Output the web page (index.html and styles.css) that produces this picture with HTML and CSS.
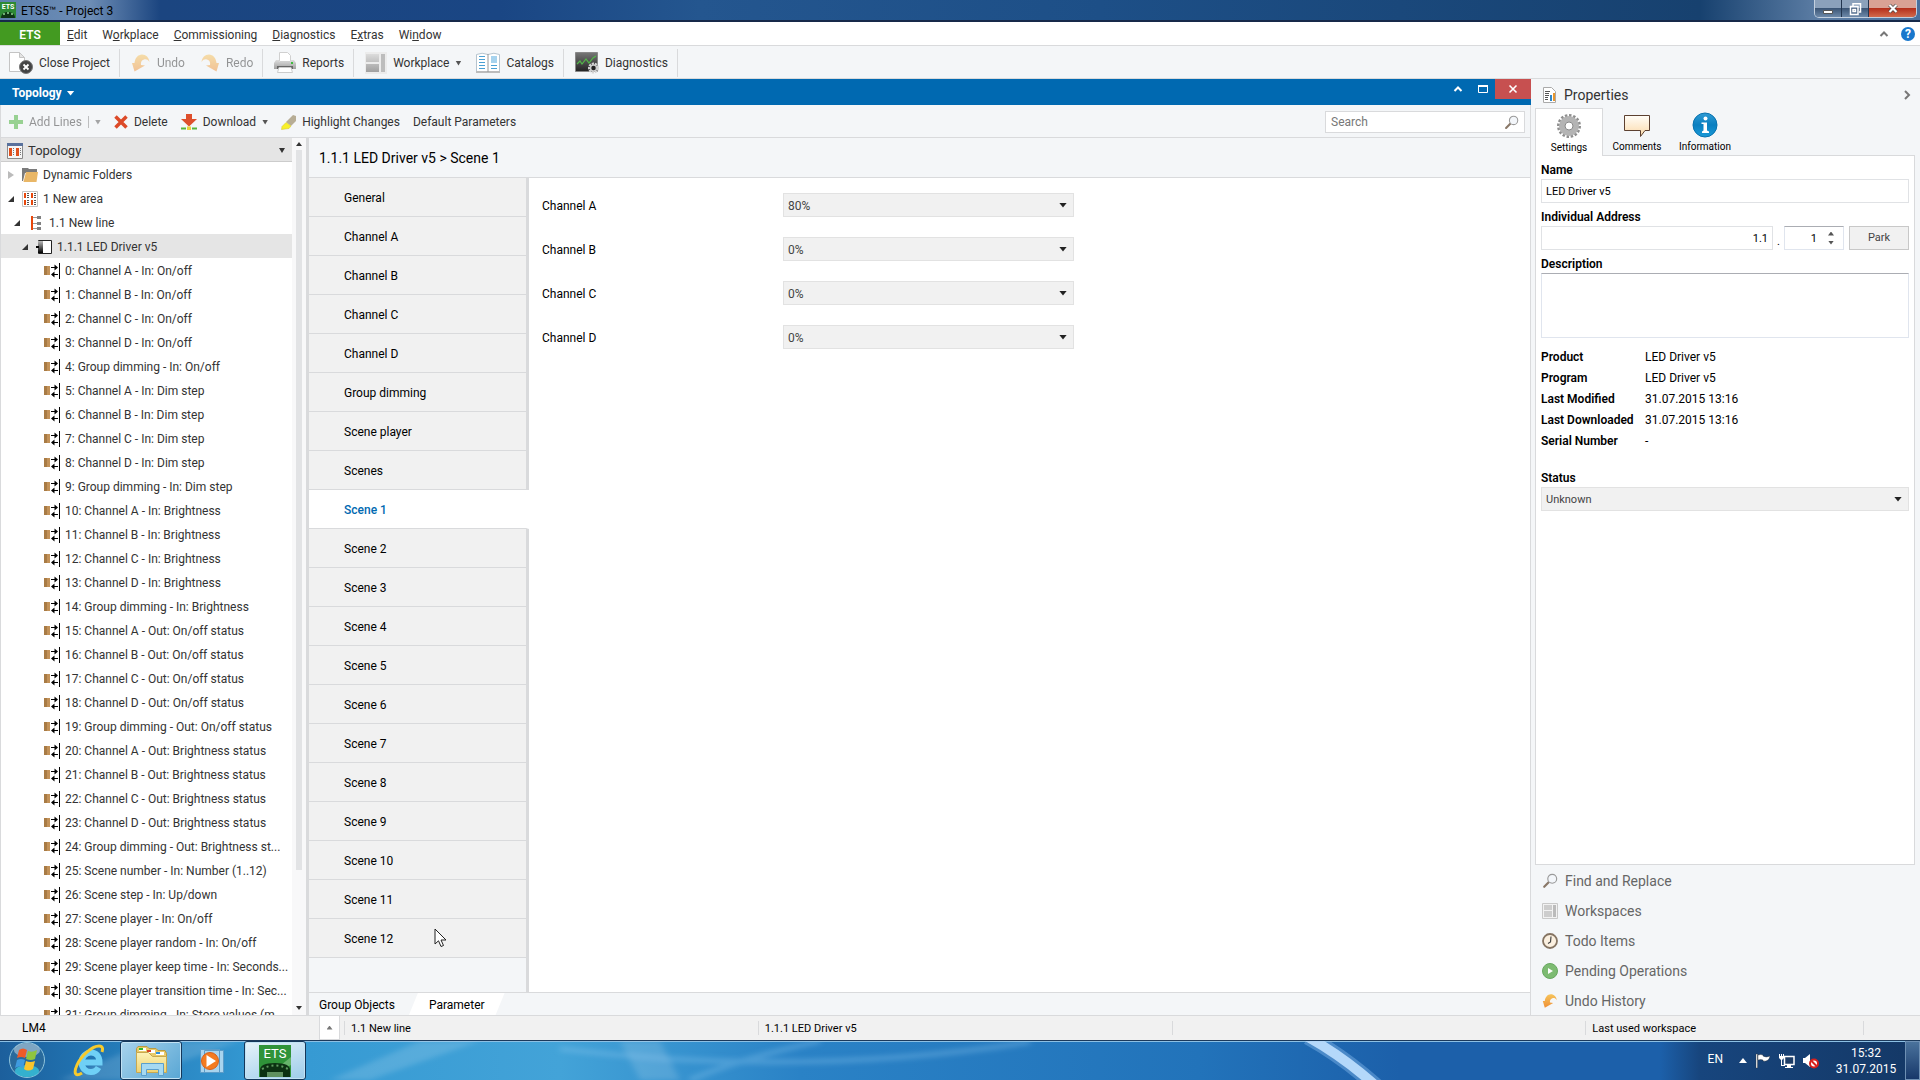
FILE: index.html
```
<!DOCTYPE html>
<html lang="en">
<head>
    <meta charset="UTF-8">
    <meta name="viewport" content="width=device-width, initial-scale=1.0">
    <title>ETS5™ - Project 3</title>
    <link rel="stylesheet" href="styles.css">
</head>
<body>
    <!-- shared icons -->
    <svg class="defs" width="0" height="0">
        <defs>
            <linearGradient id="gFolder" x1="0" y1="0" x2="0" y2="1"><stop offset="0" stop-color="#fdf3b8"/><stop offset="1" stop-color="#efd272"/></linearGradient>
            <linearGradient id="gGrey" x1="0" y1="0" x2="0" y2="1"><stop offset="0" stop-color="#dcdcdc"/><stop offset="1" stop-color="#a0a0a0"/></linearGradient>
            <linearGradient id="gDark" x1="0" y1="0" x2="0" y2="1"><stop offset="0" stop-color="#777"/><stop offset="1" stop-color="#222"/></linearGradient>
            <linearGradient id="gInfo" x1="0" y1="0" x2="0" y2="1"><stop offset="0" stop-color="#2f9bd4"/><stop offset="0.5" stop-color="#0a7fc0"/><stop offset="1" stop-color="#1a9ad8"/></linearGradient>
            <linearGradient id="gNote" x1="0" y1="0" x2="0" y2="1"><stop offset="0" stop-color="#fffdf8"/><stop offset="1" stop-color="#fbd9a8"/></linearGradient>
            <linearGradient id="gDim" x1="0" y1="1" x2="0" y2="0"><stop offset="0" stop-color="#000"/><stop offset="1" stop-color="#bbb"/></linearGradient>
            <linearGradient id="gUndo" x1="0" y1="0" x2="0" y2="1"><stop offset="0" stop-color="#f6c45c"/><stop offset="1" stop-color="#ef8f35"/></linearGradient>
        </defs>
        <symbol id="obj" viewBox="0 0 16 16">
            <path fill="#a87b45" d="M0 3h3v9H0z"/><path fill="#c39259" d="M3 3h3v9H3z"/>
            <path stroke="#000" fill="none" stroke-width="1.2" d="M7 4.5h5M8 11.500h6"/>
            <path d="M10.500 1.500 14 4.500l-3.500 3zM10.500 8.500 7 11.500l3.500 3z"/>
            <path d="M15 0h1v16h-1z"/>
        </symbol>
        <symbol id="undo" viewBox="0 0 20 20">
            <path fill="url(#gUndo)" d="M1 10 3.500 10C4 5 7 1.500 11 1.500c4 0 7 3 7.500 7.500C17 6.500 15 6 13 6.500c-2.500.7-3.500 3-3 5.500l4 .5L3.500 18.500z"/>
        </symbol>
        <symbol id="close" viewBox="0 0 16 16"><path d="m4 4 8 8m0-8-8 8"/></symbol>
        <symbol id="lens" viewBox="0 0 18 18">
            <path stroke="#8a7868" stroke-width="2.500" stroke-linecap="round" d="m2.500 15.500 5-5"/>
            <circle cx="11.500" cy="6.500" r="5" fill="#f3f6fa" stroke="#9a9a9a" stroke-width="1.300"/>
        </symbol>
    </svg>

    <header class="titlebar">
        <svg class="app-icon" viewBox="0 0 16 16"><path fill="#2d8a34" d="M0 0h16v16H0z"/><path fill="#0e3314" d="M1 16c0-4 3-6 7-6s7 2 7 6z"/><path fill="#6fae72" d="M3 11h2v2H3zm4-1h2v2H7zm4 1h2v2h-2z"/><text x="8" y="7" font-size="7" font-weight="bold" fill="#fff" text-anchor="middle">ETS</text></svg>
        <span class="title">ETS5™ - Project 3</span>
        <div class="win-buttons">
            <button aria-label="Minimize"><svg viewBox="0 0 16 14"><path fill="#fff" stroke="#555" d="M3.500 8.500h9v3h-9z"/></svg></button>
            <button aria-label="Restore"><svg viewBox="0 0 16 14"><path fill="none" stroke="#fff" stroke-width="1.500" d="M6 4V1.700h7.500V10H12M3.500 4.500h7.500v8H3.500zM6 7.500h2.500v2H6z"/></svg></button>
            <button class="win-close" aria-label="Close"><svg viewBox="0 0 16 16"><path stroke="#444" stroke-width="4" d="m4 3.500 8 8m0-8-8 8"/><path stroke="#fff" stroke-width="2.500" d="m4 3.500 8 8m0-8-8 8"/></svg></button>
        </div>
    </header>

    <nav class="menubar">
        <button class="ets">ETS</button>
        <button><u>E</u>dit</button>
        <button>W<u>o</u>rkplace</button>
        <button><u>C</u>ommissioning</button>
        <button><u>D</u>iagnostics</button>
        <button>E<u>x</u>tras</button>
        <button>Wi<u>n</u>dow</button>
        <div class="menu-right">
            <svg width="10" height="8" viewBox="0 0 10 8"><path fill="none" stroke="#777" stroke-width="2" d="m1.500 6 3.500-3.500L8.500 6"/></svg>
            <button class="help" aria-label="Help">?</button>
        </div>
    </nav>

    <div class="toolbar main-toolbar">
        <button class="group first"><svg width="24" height="24" viewBox="0 0 24 24"><path fill="#fff" stroke="#c4c4c4" d="M.5 1.500h10l5 5v14H.5z"/><path fill="#e4e4e4" stroke="#c4c4c4" d="M10.500 1.500v5h5z"/><circle cx="17" cy="16" r="6.500" fill="#444" stroke="#777"/><path stroke="#fff" stroke-width="1.800" d="m14.500 13.500 5 5m0-5-5 5"/></svg>Close Project</button>
        <div class="group">
            <button class="off"><svg width="20" height="20"><use href="#undo"/></svg>Undo</button>
            <button class="off redo"><svg class="flip" width="20" height="20"><use href="#undo"/></svg>Redo</button>
        </div>
        <button class="group"><svg width="22" height="22" viewBox="0 0 22 22"><path fill="#fff" stroke="#d0d0d0" d="M5.500.5h8l3 3v6h-11z"/><path fill="url(#gGrey)" d="M2 8h3v2h12V8h3l2 3v6H0v-6z"/><path fill="#666" d="M3 14h16v3H3z"/><path fill="#fff" stroke="#ccc" d="M5 15.500h12l1.500 5h-15z"/><path fill="#3dbb3d" d="M17 10h2v2h-2z"/></svg>Reports</button>
        <div class="group">
            <button><svg width="22" height="22" viewBox="0 0 22 22"><path fill="#ececec" d="M0 0h22v22H0z"/><path fill="url(#gGrey)" d="M1 2h13v8H1zM1 12h13v8H1z"/><path fill="#bdbdbd" d="M16 2h4v18h-4z"/></svg>Workplace<i class="arrow"></i></button>
            <button><svg width="24" height="22" viewBox="0 0 24 22"><path fill="#fff" stroke="#b5c4cf" d="M.5 2.500Q6 0 12 2.500 18 0 23.500 2.500v18H.5z"/><path fill="#bcbcbc" d="M0 19h24v2H0z"/><path stroke="#999" d="M12 2v18"/><path stroke="#4aa0d4" d="M3 4.500h6M3 7.500h6M3 10.500h6M3 13.500h6M3 16.500h6M15 13.500h6M15 16.500h6"/><path fill="#a7d3ee" d="M15 4h6v7h-6z"/></svg>Catalogs</button>
        </div>
        <button class="group"><svg width="24" height="22" viewBox="0 0 24 22"><path fill="url(#gDark)" stroke="#888" d="M.5.5h22v19H.5z"/><path fill="none" stroke="#52b848" stroke-width="1.200" d="m2 12 3-3 2 3 4-5 3 4 4-5 3-2"/><circle cx="18.500" cy="16" r="4" fill="none" stroke="#d4d4d4" stroke-width="3" stroke-dasharray="2 .8"/><circle cx="18.500" cy="16" r="3" fill="#222" stroke="#ccc" stroke-width="1.500"/></svg>Diagnostics</button>
    </div>

    <main class="workspace">
        <section class="window">
            <div class="window-title">
                <h1>Topology <i class="arrow"></i></h1>
                <div class="window-buttons">
                    <button aria-label="Collapse"><svg width="10" height="10" viewBox="0 0 10 10"><path fill="none" stroke="#fff" stroke-width="2" d="m1.500 7 3.500-3.500L8.500 7"/></svg></button>
                    <button aria-label="Maximize"><svg width="10" height="10" viewBox="0 0 10 10"><path fill="none" stroke="#fff" d="M.5 1.500h9v7h-9z"/><path fill="#fff" d="M0 1h10v2H0z"/></svg></button>
                    <button class="red" aria-label="Close"><svg width="14" height="14" stroke="#fff" stroke-width="1.800"><use href="#close"/></svg></button>
                </div>
            </div>

            <div class="toolbar edit-toolbar">
                <button class="off"><svg width="14" height="14" viewBox="0 0 14 14"><path fill="#3fae2f" d="M5 0h4v5h5v4H9v5H5V9H0V5h5z"/></svg>Add Lines<span class="split"></span><i class="arrow"></i></button>
                <button><svg width="14" height="14" viewBox="0 0 14 14"><path stroke="#dc4a28" stroke-width="3.500" d="m1.500 1.500 11 11m0-11-11 11"/></svg>Delete</button>
                <button><svg width="16" height="16" viewBox="0 0 16 16"><path fill="#de4f2c" d="M5 0h6v5h5l-8 7.500L0 5h5z"/><path fill="#57b43c" d="M0 13.500h5v2H0zM11 13.500h5v2h-5z"/><path fill="#e8d23c" d="M6 12.500h4V16H6z"/></svg>Download<i class="arrow"></i></button>
                <button><svg width="15" height="15" viewBox="0 0 15 15"><path fill="#b7ad95" d="m5 7 7-7 3 1v5L10 11z"/><path fill="#f8f028" stroke="#cfc12f" stroke-width=".5" d="M5 7.500 10 11l-2 2.500-7.500 1 .5-3z"/></svg>Highlight Changes</button>
                <button>Default Parameters</button>
                <label class="search"><input type="text" placeholder="Search" aria-label="Search"><svg width="15" height="15"><use href="#lens"/></svg></label>
            </div>

            <div class="content">
                <div class="tree-pane">
                    <div class="tree-head"><svg width="16" height="16" viewBox="0 0 16 16"><path fill="#f6f6f6" stroke="#8a8a8a" d="M.5.5h15v15H.5z"/><path fill="#59719c" d="M0 0h16v3H0z"/><path fill="#e04f1c" d="M2 5h3v8H2zM9 5h3v8H9z"/><path stroke="#777" stroke-dasharray="1 1" d="M6.500 5v8M13.500 5v8"/></svg>Topology<i class="arrow"></i></div>
                    <ul class="tree">
                        <li class="lv0"><i class="shut"></i><svg viewBox="0 0 16 16"><path fill="#7b7b7b" d="M0 1h6l1 1h8v4H3L1 14H0z"/><path fill="#e9b767" d="M4 5h12l-1.500 10H1.500z"/></svg>Dynamic Folders</li>
                        <li class="lv0"><i class="open"></i><svg viewBox="0 0 16 16"><path fill="#fff" stroke="#c4c4c4" d="M.5.5h15v15H.5z"/><path fill="#e8470c" d="M2 2h2v5H2zM9 2h2v5H9zM2 9h2v5H2zM9 9h2v5H9z"/><path stroke="#555" stroke-dasharray="1 1" stroke-width="2" d="M6 2v5M6 9v5M13 2v5M13 9v5"/></svg>1 New area</li>
                        <li class="lv1"><i class="open"></i><svg viewBox="0 0 16 16"><path fill="#e8470c" d="M3 1h2v14H3z"/><path stroke="#999" d="M5 2.500h5M5 8.500h5M5 13.500h5"/><path fill="#808080" d="M9 1h4v3H9zM9 7h4v3H9zM9 12h4v3H9z"/></svg>1.1 New line</li>
                        <li class="lv2 selected"><i class="open"></i><svg viewBox="0 0 16 16"><path fill="#fff" stroke="#222" d="M2.500 1.500h13v13h-13z"/><path fill="url(#gDim)" d="M2 2h5v12H2z"/><path d="M0 7h3v2H0z"/></svg>1.1.1 LED Driver v5</li>
                        <li><svg><use href="#obj"/></svg>0: Channel A - In: On/off</li>
                        <li><svg><use href="#obj"/></svg>1: Channel B - In: On/off</li>
                        <li><svg><use href="#obj"/></svg>2: Channel C - In: On/off</li>
                        <li><svg><use href="#obj"/></svg>3: Channel D - In: On/off</li>
                        <li><svg><use href="#obj"/></svg>4: Group dimming - In: On/off</li>
                        <li><svg><use href="#obj"/></svg>5: Channel A - In: Dim step</li>
                        <li><svg><use href="#obj"/></svg>6: Channel B - In: Dim step</li>
                        <li><svg><use href="#obj"/></svg>7: Channel C - In: Dim step</li>
                        <li><svg><use href="#obj"/></svg>8: Channel D - In: Dim step</li>
                        <li><svg><use href="#obj"/></svg>9: Group dimming - In: Dim step</li>
                        <li><svg><use href="#obj"/></svg>10: Channel A - In: Brightness</li>
                        <li><svg><use href="#obj"/></svg>11: Channel B - In: Brightness</li>
                        <li><svg><use href="#obj"/></svg>12: Channel C - In: Brightness</li>
                        <li><svg><use href="#obj"/></svg>13: Channel D - In: Brightness</li>
                        <li><svg><use href="#obj"/></svg>14: Group dimming - In: Brightness</li>
                        <li><svg><use href="#obj"/></svg>15: Channel A - Out: On/off status</li>
                        <li><svg><use href="#obj"/></svg>16: Channel B - Out: On/off status</li>
                        <li><svg><use href="#obj"/></svg>17: Channel C - Out: On/off status</li>
                        <li><svg><use href="#obj"/></svg>18: Channel D - Out: On/off status</li>
                        <li><svg><use href="#obj"/></svg>19: Group dimming - Out: On/off status</li>
                        <li><svg><use href="#obj"/></svg>20: Channel A - Out: Brightness status</li>
                        <li><svg><use href="#obj"/></svg>21: Channel B - Out: Brightness status</li>
                        <li><svg><use href="#obj"/></svg>22: Channel C - Out: Brightness status</li>
                        <li><svg><use href="#obj"/></svg>23: Channel D - Out: Brightness status</li>
                        <li><svg><use href="#obj"/></svg>24: Group dimming - Out: Brightness st...</li>
                        <li><svg><use href="#obj"/></svg>25: Scene number - In: Number (1..12)</li>
                        <li><svg><use href="#obj"/></svg>26: Scene step - In: Up/down</li>
                        <li><svg><use href="#obj"/></svg>27: Scene player - In: On/off</li>
                        <li><svg><use href="#obj"/></svg>28: Scene player random - In: On/off</li>
                        <li><svg><use href="#obj"/></svg>29: Scene player keep time - In: Seconds...</li>
                        <li><svg><use href="#obj"/></svg>30: Scene player transition time - In: Sec...</li>
                        <li><svg><use href="#obj"/></svg>31: Group dimming - In: Store values (m...</li>
                    </ul>
                </div>
                <div class="scroll"><i class="arrow up"></i><div class="thumb"></div><i class="arrow"></i></div>

                <div class="device">
                    <h2>1.1.1 LED Driver v5 &gt; Scene 1</h2>
                    <div class="params">
                        <nav class="pages">
                            <button>General</button>
                            <button>Channel A</button>
                            <button>Channel B</button>
                            <button>Channel C</button>
                            <button>Channel D</button>
                            <button>Group dimming</button>
                            <button>Scene player</button>
                            <button>Scenes</button>
                            <button class="active">Scene 1</button>
                            <button>Scene 2</button>
                            <button>Scene 3</button>
                            <button>Scene 4</button>
                            <button>Scene 5</button>
                            <button>Scene 6</button>
                            <button>Scene 7</button>
                            <button>Scene 8</button>
                            <button>Scene 9</button>
                            <button>Scene 10</button>
                            <button>Scene 11</button>
                            <button>Scene 12</button>
                            <div class="rest"></div>
                        </nav>
                        <form class="channels">
                            <label for="chA">Channel A</label>
                            <div class="select"><select id="chA"><option>80%</option></select><i class="arrow"></i></div>
                            <label for="chB">Channel B</label>
                            <div class="select"><select id="chB"><option>0%</option></select><i class="arrow"></i></div>
                            <label for="chC">Channel C</label>
                            <div class="select"><select id="chC"><option>0%</option></select><i class="arrow"></i></div>
                            <label for="chD">Channel D</label>
                            <div class="select"><select id="chD"><option>0%</option></select><i class="arrow"></i></div>
                        </form>
                    </div>
                    <div class="bottom-tabs">
                        <button>Group Objects</button>
                        <button class="active">Parameter</button>
                    </div>
                </div>
            </div>
        </section>

        <aside class="side">
            <div class="side-head">
                <svg width="16" height="16" viewBox="0 0 16 16"><path fill="#fff" stroke="#aaa" d="M1.500.5h8l4 4v11h-12z"/><path stroke="#555" d="M3 4.500h5M3 6.500h4M3 8.500h4M3 10.500h3M3 12.500h3"/><path fill="#2e86c8" d="M8 8h2v6H8z"/><path fill="#e8962c" d="M11 6h2v8h-2z"/></svg>
                <span>Properties</span>
                <svg width="8" height="10" viewBox="0 0 8 10"><path fill="none" stroke="#777" stroke-width="2" d="m2 1 4 4-4 4"/></svg>
            </div>
            <div class="side-tabs">
                <button class="active"><svg width="26" height="26" viewBox="0 0 26 26"><circle cx="13" cy="13" r="10.500" fill="none" stroke="#8e8e8e" stroke-width="3" stroke-dasharray="2.400 1.700"/><circle cx="13" cy="13" r="7" fill="none" stroke="#b4b4b4" stroke-width="6"/><circle cx="13" cy="13" r="4" fill="#fff" stroke="#888"/></svg>Settings</button>
                <button><svg width="26" height="26" viewBox="0 0 26 26"><path fill="url(#gNote)" stroke="#5c4030" d="M.5 3.500h25v15h-4.500l-4.500 6v-6H.5z"/></svg>Comments</button>
                <button><svg width="26" height="26" viewBox="0 0 26 26"><circle cx="13" cy="13" r="12" fill="url(#gInfo)" stroke="#0872ae"/><circle cx="13.500" cy="6.500" r="2" fill="#fff"/><path fill="#fff" d="M9.500 10.500h5.500v8l2 1v1.500h-7v-1.500l1.500-1V12h-2z"/></svg>Information</button>
            </div>
            <form class="properties">
                <label for="name">Name</label>
                <input id="name" type="text" value="LED Driver v5">
                <label for="line">Individual Address</label>
                <div class="address">
                    <input id="line" class="line" type="text" value="1.1">
                    <span>.</span>
                    <div class="spinner"><input type="text" value="1" aria-label="Device address"><div><i class="arrow up"></i><i class="arrow"></i></div></div>
                    <button type="button">Park</button>
                </div>
                <label for="description">Description</label>
                <textarea id="description"></textarea>
                <dl>
                    <dt>Product</dt><dd>LED Driver v5</dd>
                    <dt>Program</dt><dd>LED Driver v5</dd>
                    <dt>Last Modified</dt><dd>31.07.2015 13:16</dd>
                    <dt>Last Downloaded</dt><dd>31.07.2015 13:16</dd>
                    <dt>Serial Number</dt><dd>-</dd>
                </dl>
                <label for="status">Status</label>
                <div class="select"><select id="status"><option>Unknown</option></select><i class="arrow"></i></div>
            </form>
            <nav class="side-links">
                <button><svg><use href="#lens"/></svg>Find and Replace</button>
                <button><svg viewBox="0 0 16 16"><path fill="#f2f2f2" stroke="#c9c9c9" d="M.5.500h15v15H.5z"/><path fill="#cdcdcd" d="M2 2h8v5H2zM2 8h8v6H2z"/><path fill="#bbb" d="M11 2h3v12h-3z"/></svg>Workspaces</button>
                <button><svg viewBox="0 0 16 16"><circle cx="8" cy="8" r="7" fill="#fbf0e0" stroke="#857462" stroke-width="1.800"/><path fill="none" stroke="#444" stroke-width="1.200" d="M9 3.500 8.500 9 6 10.500"/></svg>Todo Items</button>
                <button><svg viewBox="0 0 16 16"><circle cx="8" cy="8" r="7.500" fill="#7dbb72" stroke="#68a860"/><path fill="#fff" d="m6 5 5 3-5 3z"/></svg>Pending Operations</button>
                <button><svg><use href="#undo"/></svg>Undo History</button>
            </nav>
        </aside>
    </main>

    <footer class="statusbar">
        <span class="lm">LM4</span>
        <button aria-label="Expand"><i class="arrow up"></i></button>
        <span class="cell">1.1 New line</span>
        <span class="cell">1.1.1 LED Driver v5</span>
        <span class="cell"></span>
        <span class="cell narrow">Last used workspace</span>
        <span class="cell last"></span>
    </footer>

    <div class="taskbar">
        <svg class="streaks" viewBox="0 0 1920 40" preserveAspectRatio="none">
            <defs>
                <filter id="soft" x="-10%" y="-50%" width="120%" height="200%"><feGaussianBlur stdDeviation="3"/></filter>
            </defs>
            <g filter="url(#soft)">
                <path fill="#fff" opacity=".14" d="M60 40 150 0h90L130 40zM330 40l90-40h60l-110 40zM620 0h40l20 40h-40z"/>
                <path fill="none" stroke="#8cc8f0" stroke-width="6" opacity=".3" d="M560 8q240 30 470-7M690 40Q740 18 820 0"/>
            </g>
            <path fill="none" stroke="#8fc0ef" stroke-width="16" opacity=".4" d="M1308-4q35 20 68 50"/>
            <path fill="none" stroke="#b4d8fa" stroke-width="10" d="M1308-4q35 20 68 50"/>
        </svg>
        <button class="start" aria-label="Start"><svg width="38" height="38" viewBox="0 0 38 38"><circle cx="19" cy="19" r="17.500" fill="#296a9c" stroke="#8fc4dc"/><ellipse cx="19" cy="30" rx="12" ry="6" fill="#39d0e6" opacity=".7"/><ellipse cx="19" cy="9" rx="13" ry="7" fill="#b9cede" opacity=".6"/><path fill="#ee5b28" d="M11 9q4-3 8 0l-2 8q-4-2-8 0z"/><path fill="#8fc53f" d="M20 10q4 2 9-1l-2 9q-4 2-9 0z"/><path fill="#3f9be0" d="M9 19q4-2 8 0l-2 8q-4-3-8 0z"/><path fill="#fcc52c" d="M18 20q4 2 9 0l-2 8q-5 3-9 0z"/></svg></button>
        <button class="app" aria-label="Internet Explorer"><svg width="34" height="34" viewBox="0 0 34 34"><path fill="none" stroke="#6fd0f6" stroke-width="6" d="M10 18.500h17.500C27.500 12 24 8.500 19 8.500S9.500 13 9.500 18.500 14 28 19 28q5 0 7.500-4.500"/><path fill="none" stroke="#f6ca2c" stroke-width="3" d="M10 29c-6 4-9 1-5-8C9 12 20 2 27 2c4 0 4 3 3 6"/></svg></button>
        <button class="app running" aria-label="Windows Explorer"><svg width="34" height="34" viewBox="0 0 34 34"><path fill="#e8ca6a" stroke="#b99a42" d="M2.500 4.500 4 2.500h9l2 2h7l2 2h7l1.500 3v18h-30z"/><path fill="#fff" d="M5 4h7v3H5zM13 6h8v3h-8zM22 8h8v3h-8z"/><path fill="#2eb82e" d="M5 4h4v2H5z"/><path fill="#d84424" d="M13 6h4v2h-4z"/><path fill="#2e8fe0" d="M22 8h4v2h-4z"/><path fill="url(#gFolder)" stroke="#c8a850" d="M2.500 8.500h12l4 4h14v16h-30z"/><path fill="#a6d9f2" stroke="#5b9fcc" d="M7.500 31.500v-12h22v12h-5v-6h-12v6z"/></svg></button>
        <button class="app" aria-label="Media Player"><svg width="34" height="34" viewBox="0 0 34 34"><path fill="#a9d4ee" stroke="#5c9cc8" d="M8.500 6.500h19v22h-19zM4.500 5.500h19v23h-19z"/><circle cx="14" cy="17" r="8.500" fill="#f47b20" stroke="#d8601a"/><path fill="#fff" d="m10.500 11 9.500 6-9.500 6z"/></svg></button>
        <button class="app running current" aria-label="ETS"><svg width="32" height="32" viewBox="0 0 32 32"><path fill="#2f9339" d="M0 0h32v32H0z"/><path fill="#8cc98c" opacity=".6" d="m32 12-10 8 6 2 4-2z"/><path fill="#0c3112" d="M1 32v-7q0-7 15-7t15 7v7z"/><path fill="none" stroke="#5f9c60" stroke-width="2" stroke-dasharray="2 3" d="M3 24q13-7 26 0"/><path fill="#5f9060" d="M8 27h16v5H8z"/><text x="16" y="13" font-size="13" fill="#fff" text-anchor="middle">ETS</text></svg></button>
        <div class="tray">
            <span class="lang">EN</span>
            <i class="arrow up"></i>
            <svg viewBox="0 0 16 16"><path fill="#fff" stroke="#333" stroke-width=".4" d="M1 1h1.500v14H1zM3 2q3-1 5 0v1q3 2 7 0-1 6-7 5V7q-2-1-5 0z"/></svg>
            <svg viewBox="0 0 16 16"><path fill="#1c3c66" stroke="#fff" stroke-width="1.500" d="M5.500 3.500h9.500v8H5.500z"/><path fill="#fff" d="M8 12h4v2h2v1H6v-1h2zM0 1h1v2h1V1h1v2h1V1h1v4L3 7v5h3v1H2V7L0 5z"/></svg>
            <svg viewBox="0 0 16 16"><path fill="#fff" d="M0 5h2l5-4v13l-5-4H0z"/><circle cx="11" cy="10.500" r="4" fill="#fff" stroke="#d8201c" stroke-width="2"/><path stroke="#d8201c" stroke-width="2" d="m8.500 8 5 5"/></svg>
            <div class="clock"><span>15:32</span><span>31.07.2015</span></div>
        </div>
        <button class="show-desktop" aria-label="Show desktop"></button>
    </div>

    <svg class="cursor" width="13" height="20" viewBox="0 0 13 20"><path fill="#fff" stroke="#222" d="M1 1v15l3.500-3.200L7 18.500l2.500-1L7 12h5z"/></svg>
</body>
</html>
```
FILE: styles.css
```
* {
    box-sizing: border-box;
}
body {
    margin: 0;
    height: 100vh;
    display: flex;
    flex-direction: column;
    overflow: hidden;
    font-family: Roboto, "Open Sans", sans-serif;
    font-size: 12px;
    line-height: 16px;
    color: #333;
    background-color: #f4f6f8;
}
button, input, select, textarea {
    font: inherit;
    color: inherit;
    margin: 0;
    padding: 0;
    border: none;
    border-radius: 0;
    background: none;
}
svg {
    flex: none;
}
.defs, .cursor {
    position: absolute;
}
.cursor {
    left: 434px;
    top: 928px;
}

/* small triangle used on menus, selects and scrollbars */
.arrow {
    flex: none;
    width: 8px;
    height: 5px;
    background-color: currentColor;
    clip-path: polygon(0 0, 100% 0, 50% 100%);
}
.arrow.up {
    clip-path: polygon(50% 0, 100% 100%, 0 100%);
}

/* title bar */
.titlebar {
    flex: none;
    height: 22px;
    display: flex;
    align-items: center;
    background: linear-gradient(90deg, #5c80ad 0, #6d8db5 90px, #1b4580 160px, #1a4684 500px, #24568f 700px, #1d4f87 1100px, #17416f 1700px, #5d7ea5 1820px, #49709d 100%);
    border-bottom: 2px solid #16294a;
    color: #000;
}
.title {
    margin-left: 5px;
    padding-top: 2px;
}
.app-icon {
    width: 16px;
    height: 16px;
}
.win-buttons {
    margin-left: auto;
    margin-right: 3px;
    align-self: flex-start;
    display: flex;
    height: 18px;
    border: 1px solid #c3d0df;
    border-top: none;
    border-radius: 0 0 5px 5px;
    overflow: hidden;
}
.win-buttons button {
    width: 27px;
    display: flex;
    align-items: center;
    justify-content: center;
    border-right: 1px solid #22354f;
    background: linear-gradient(#8ba1bb 45%, #3c5676 50%, #6d89a9);
}
.win-buttons svg {
    width: 16px;
    height: 14px;
}
.win-buttons .win-close {
    width: 47px;
    border: none;
    background: linear-gradient(#d9a194 45%, #b5301c 50%, #d26a4c);
}

/* menu */
.menubar {
    flex: none;
    height: 24px;
    display: flex;
    background-color: #fff;
    border-bottom: 1px solid #d9dadc;
}
.menubar button {
    padding: 2px 8px 0 7px;
}
.menubar .ets {
    width: 60px;
    padding: 2px 0 0;
    background-color: #439a21;
    color: #fff;
    font-weight: 600;
}
.menu-right {
    margin-left: auto;
    margin-right: 5px;
    display: flex;
    align-items: center;
    gap: 12px;
}
.menubar .help {
    width: 14px;
    height: 14px;
    padding: 0;
    border-radius: 50%;
    background-color: #1877cc;
    color: #fff;
    font-weight: bold;
    line-height: 14px;
}

/* toolbars */
.toolbar {
    flex: none;
    display: flex;
    align-items: center;
    padding-top: 2px;
    border-bottom: 1px solid #d9dadc;
}
.toolbar button {
    display: flex;
    align-items: center;
    gap: 6px;
}
.toolbar .arrow {
    width: 6px;
    color: #555;
}
.main-toolbar {
    height: 33px;
}
.main-toolbar .group {
    height: 28px;
    display: flex;
    align-items: center;
    padding: 0 9px 0 11px;
    border-right: 1px solid #d9dadc;
}
.main-toolbar .group.first {
    padding-left: 9px;
}
div.group {
    gap: 15px;
}
.off {
    opacity: 0.5;
}
.flip {
    transform: scaleX(-1);
}
.edit-toolbar {
    height: 33px;
    padding: 2px 5px 0 8px;
    gap: 13px;
}
.split {
    width: 1px;
    height: 12px;
    background-color: #888;
}
.search {
    margin-left: auto;
    width: 200px;
    height: 22px;
    display: flex;
    align-items: center;
    padding: 0 5px;
    background-color: #fff;
    border: 1px solid #d9dadc;
}
.search input {
    flex: 1;
    min-width: 0;
    outline: none;
}
.search input::placeholder {
    color: #777;
}

/* topology window */
.workspace {
    flex: 1;
    min-height: 0;
    display: flex;
}
.window {
    flex: 1;
    min-width: 0;
    display: flex;
    flex-direction: column;
    border-left: 1px solid #d9dadc;
    border-right: 1px solid #d9dadc;
}
.window-title {
    flex: none;
    height: 26px;
    display: flex;
    align-items: center;
    margin: 0 -1px;
    padding-left: 12px;
    background-color: #0069b1;
    color: #fff;
}
.window-title h1 {
    margin: 0;
    padding-top: 2px;
    display: flex;
    align-items: center;
    gap: 5px;
    font-size: 12px;
    font-weight: bold;
}
.window-buttons {
    margin-left: auto;
    align-self: flex-start;
    display: flex;
}
.window-buttons button {
    width: 25px;
    height: 20px;
    display: flex;
    align-items: center;
    justify-content: center;
}
.window-buttons .red {
    width: 36px;
    background-color: #c75050;
}
.content {
    flex: 1;
    min-height: 0;
    display: flex;
}

/* tree */
.tree-pane {
    width: 291px;
    display: flex;
    flex-direction: column;
    background-color: #fff;
}
.tree-head {
    flex: none;
    height: 24px;
    display: flex;
    align-items: center;
    gap: 5px;
    padding: 2px 7px 0 6px;
    background-color: #e5e5e5;
    border-bottom: 1px solid #ccc;
    font-size: 13px;
}
.tree-head .arrow {
    width: 6px;
    margin-left: auto;
}
.tree {
    flex: 1;
    min-height: 0;
    overflow: hidden;
    margin: 0;
    padding: 0;
    list-style: none;
}
.tree li {
    height: 24px;
    display: flex;
    align-items: center;
    padding-top: 2px;
    padding-left: 43px;
    white-space: nowrap;
}
.tree svg {
    width: 16px;
    height: 16px;
    margin-right: 5px;
}
.tree .lv0 {
    padding-left: 7px;
}
.tree .lv1 {
    padding-left: 13px;
}
.tree .lv2 {
    padding-left: 21px;
}
.tree .selected {
    background-color: #e5e5e5;
}
.open, .shut {
    width: 6px;
    height: 6px;
    margin-right: 8px;
    background-color: #333;
    clip-path: polygon(100% 0, 100% 100%, 0 100%);
}
.shut {
    height: 8px;
    background-color: #bbb;
    clip-path: polygon(0 0, 100% 50%, 0 100%);
}
.scroll {
    width: 14px;
    display: flex;
    flex-direction: column;
    align-items: center;
    padding: 4px 0 5px;
    background-color: #f8f8f9;
}
.scroll .arrow {
    width: 6px;
    height: 4px;
}
.thumb {
    width: 6px;
    height: 83%;
    margin: 4px 0 auto;
    background-color: #e2e3e5;
}

/* device parameters */
.device {
    flex: 1;
    min-width: 0;
    display: flex;
    flex-direction: column;
    border-left: 3px solid #d9dadc;
    color: #000;
}
.device h2 {
    flex: none;
    height: 40px;
    margin: 0;
    padding-left: 10px;
    border-bottom: 1px solid #d9dadc;
    font-size: 14px;
    font-weight: normal;
    line-height: 40px;
}
.params {
    flex: 1;
    min-height: 0;
    display: flex;
}
.pages {
    width: 220px;
    display: flex;
    flex-direction: column;
}
.pages button {
    flex: none;
    height: 39px;
    padding: 2px 0 0 35px;
    text-align: left;
    background-color: #f1f1f1;
    border-bottom: 1px solid #d9dadc;
    border-right: 3px solid #d9dadc;
}
.pages .active {
    background-color: #fff;
    border-right-color: #fff;
    color: #0069b1;
    font-weight: 500;
}
.rest {
    flex: 1;
    border-right: 3px solid #d9dadc;
}
.channels {
    flex: 1;
    display: grid;
    grid-template-columns: 241px 291px;
    align-content: start;
    align-items: center;
    row-gap: 20px;
    padding: 15px 0 0 13px;
    background-color: #fff;
}
.channels label {
    padding-top: 2px;
}
.select {
    display: grid;
    align-items: center;
}
.select select, .select .arrow {
    grid-area: 1 / 1;
}
.select select {
    appearance: none;
    height: 24px;
    padding: 1px 4px 0;
    background-color: #f1f1f1;
    border: 1px solid #e2e2e2;
    color: #444;
}
.select .arrow {
    justify-self: end;
    margin-right: 7px;
    color: #222;
    pointer-events: none;
}
.bottom-tabs {
    flex: none;
    height: 23px;
    display: flex;
    border-top: 1px solid #d9dadc;
}
.bottom-tabs button {
    padding: 2px 14px 0 10px;
}
.bottom-tabs .active {
    padding: 2px 20px 0;
    background-color: #fff;
    clip-path: polygon(9px 0, 100% 0, calc(100% - 9px) 100%, 0 100%);
}

/* properties */
.side {
    width: 389px;
    display: flex;
    flex-direction: column;
    padding: 0 5px 0 4px;
}
.side-head {
    flex: none;
    height: 29px;
    display: flex;
    align-items: center;
    gap: 6px;
    padding: 2px 4px 0 7px;
    font-size: 14px;
}
.side-head svg:last-child {
    margin-left: auto;
}
.side-tabs {
    position: relative;
    z-index: 1;
    display: flex;
    margin-bottom: -1px;
    color: #000;
}
.side-tabs button {
    width: 68px;
    height: 48px;
    display: flex;
    flex-direction: column;
    align-items: center;
    gap: 1px;
    padding-top: 4px;
    font-size: 10px;
}
.side-tabs .active {
    background-color: #fff;
    border: 1px solid #d9dadc;
    border-bottom: none;
}
.properties {
    flex: 1;
    min-height: 0;
    padding: 3px 5px;
    background-color: #fff;
    border: 1px solid #d9dadc;
    color: #000;
    font-size: 11px;
}
.properties label {
    display: block;
    height: 20px;
    font-size: 12px;
    font-weight: 600;
    line-height: 22px;
}
.properties input, .properties textarea {
    display: block;
    width: 100%;
    height: 24px;
    border: 1px solid #e0e2e5;
    padding: 1px 4px 0;
}
.properties > input, .address {
    margin-bottom: 3px;
}
.address {
    display: flex;
    height: 24px;
}
.address .line {
    flex: 1;
    text-align: right;
}
.address > span {
    width: 11px;
    padding-top: 8px;
    text-align: center;
}
.spinner {
    width: 60px;
    display: flex;
    border: 1px solid #e0e5ee;
    border-top-color: #abadb3;
}
.spinner input {
    height: 22px;
    border: none;
    padding-right: 2px;
    text-align: right;
}
.spinner > div {
    width: 24px;
    flex: none;
    display: flex;
    flex-direction: column;
    align-items: center;
    justify-content: center;
    gap: 5px;
    color: #555;
}
.spinner .arrow {
    width: 6px;
    height: 4px;
}
.address button {
    width: 60px;
    margin-left: 5px;
    background-color: #f1f1f1;
    border: 1px solid #c8c8c8;
    color: #444;
}
.properties textarea {
    height: 65px;
    border-color: #e0e5ee;
    border-top-color: #abadb3;
    resize: none;
}
.properties dl {
    display: grid;
    grid-template-columns: 104px 1fr;
    margin: 9px 0 15px;
    line-height: 21px;
    font-size: 12px;
}
.properties dt {
    font-weight: 600;
    white-space: nowrap;
}
.properties dd {
    margin: 0;
}
.side-links {
    flex: none;
    display: flex;
    flex-direction: column;
    padding-left: 7px;
}
.side-links button {
    height: 30px;
    padding-top: 2px;
    display: flex;
    align-items: center;
    gap: 7px;
    font-size: 14px;
    color: #666;
}
.side-links svg {
    width: 16px;
    height: 16px;
}

/* status bar */
.statusbar {
    flex: none;
    height: 25px;
    display: flex;
    align-items: center;
    background-color: #f1f1f1;
    border-top: 1px solid #d9dadc;
    color: #000;
    font-size: 11px;
}
.statusbar .lm {
    width: 319px;
    padding-left: 22px;
    font-size: 12px;
}
.statusbar button {
    width: 21px;
    align-self: stretch;
    display: flex;
    align-items: center;
    justify-content: center;
    margin-right: 4px;
    background-color: #fff;
    border: 1px solid #d9dadc;
    border-top: none;
    color: #777;
}
.statusbar .arrow {
    width: 6px;
    height: 4px;
}
.cell {
    flex: 416 0 0;
    min-width: 0;
    height: 14px;
    padding-left: 6px;
    border-left: 1px solid #d9dadc;
    line-height: 16px;
}
.cell.narrow {
    flex-grow: 277;
}
.cell.last {
    flex-grow: 51;
}

/* taskbar */
.taskbar {
    flex: none;
    height: 40px;
    position: relative;
    display: flex;
    background: linear-gradient(90deg, #1c5f9c 0, #2277b5 100px, #3398d2 250px, #43a3d8 560px, #2a82c6 800px, #2273ba 1200px, #1c60aa 1400px, #1c60aa 1660px, #17457d 1700px, #143866 100%);
    border-top: 1px solid #1c3a5c;
    box-shadow: inset 0 1px 0 #8cc0e4;
    color: #fff;
}
.streaks {
    position: absolute;
    width: 100%;
    height: 100%;
}
.taskbar button, .tray {
    position: relative;
}
.start {
    width: 54px;
}
.app {
    width: 62px;
    display: flex;
    align-items: center;
    justify-content: center;
}
.start + .app {
    margin-left: 4px;
}
.running {
    border: 1px solid #14375a;
    border-radius: 3px;
    background: linear-gradient(135deg, #a8d3ec, #58a6d4);
    box-shadow: inset 0 0 0 1px #c2e2f4;
}
.current {
    background: linear-gradient(160deg, #e6f3fa, #9dccea);
}
.tray {
    margin-left: auto;
    display: flex;
    align-items: center;
    gap: 8px;
}
.tray svg {
    width: 16px;
    height: 16px;
}
.lang {
    margin: 0 8px 4px 0;
}
.clock {
    width: 78px;
    display: flex;
    flex-direction: column;
    text-align: center;
}
.show-desktop {
    width: 15px;
    border: 1px solid #6e90b4;
    background: linear-gradient(#4a729c, #17386a);
}
```
